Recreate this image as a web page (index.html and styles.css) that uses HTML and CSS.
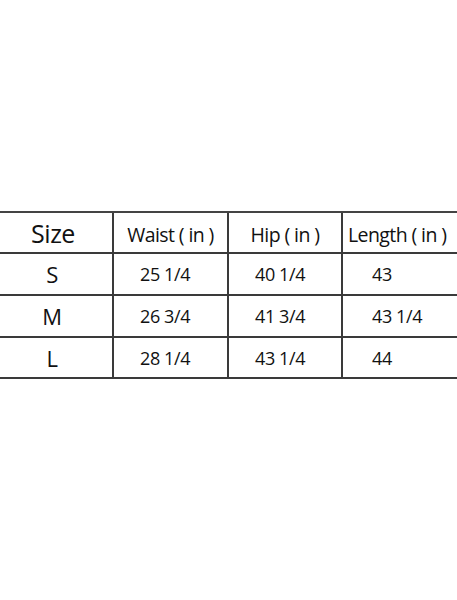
FILE: index.html
```html
<!DOCTYPE html>
<html>
<head>
<meta charset="utf-8">
<link rel="stylesheet" href="styles.css">
</head>
<body>
<div class="chart">
  <div class="cell head size">Size</div>
  <div class="cell head">Waist ( in )</div>
  <div class="cell head">Hip ( in )</div>
  <div class="cell head last">Length ( in )</div>

  <div class="cell label">S</div>
  <div class="cell val">25 1/4</div>
  <div class="cell val">40 1/4</div>
  <div class="cell val v4">43</div>

  <div class="cell label">M</div>
  <div class="cell val">26 3/4</div>
  <div class="cell val">41 3/4</div>
  <div class="cell val v4">43 1/4</div>

  <div class="cell label">L</div>
  <div class="cell val">28 1/4</div>
  <div class="cell val">43 1/4</div>
  <div class="cell val v4">44</div>
</div>
</body>
</html>
```
FILE: styles.css
```css
html, body {
  margin: 0;
  padding: 0;
  background: #fff;
}
body {
  font-family: "Open Sans", "Liberation Sans", sans-serif;
  color: #111;
}
.chart {
  margin-top: 211px;
  display: grid;
  grid-template-columns: 114px 115px 114px 114px;
  grid-template-rows: 41px 42px 42px 41px;
  border-top: 2px solid #444;
}
.cell {
  display: flex;
  align-items: center;
  border-bottom: 2px solid #3a3a3a;
  border-right: 2px solid #3a3a3a;
  font-size: 18px;
  letter-spacing: -0.4px;
  white-space: nowrap;
  box-sizing: border-box;
}
.cell:nth-child(4n) {
  border-right: none;
}
.head {
  justify-content: center;
  font-size: 19.5px;
  letter-spacing: -0.6px;
  padding-top: 3px;
}
.head.last {
  justify-content: flex-start;
  padding-left: 5px;
}
.size {
  font-size: 25px;
  letter-spacing: -0.5px;
  padding-top: 0;
  padding-right: 6px;
}
.label {
  justify-content: center;
  font-size: 22px;
  padding-right: 8px;
}
.val {
  padding-left: 26px;
}
.v4 {
  padding-left: 29px;
}
```
